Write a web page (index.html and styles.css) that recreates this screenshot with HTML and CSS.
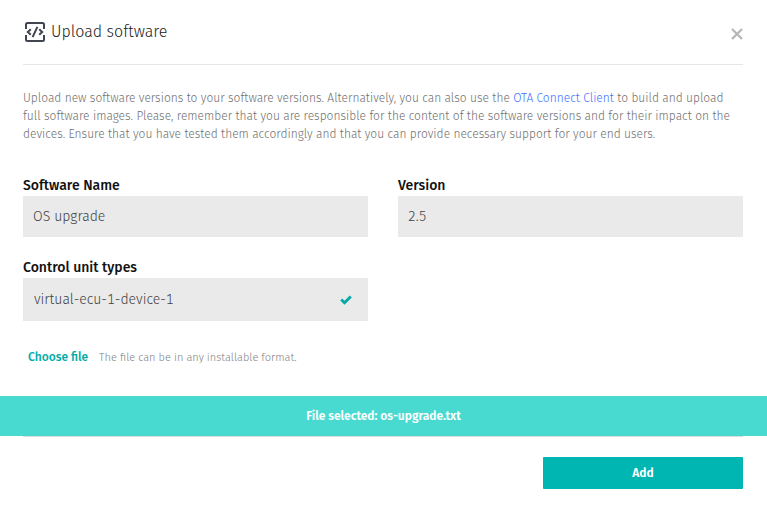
FILE: index.html
```html
<!DOCTYPE html>
<html lang="en">
<head>
<meta charset="utf-8">
<meta name="viewport" content="width=device-width, initial-scale=1">
<title>Upload software</title>
<link rel="stylesheet" href="styles.css">
</head>
<body>
<main class="dialog">
  <header class="dialog-header">
    <svg class="title-icon" viewBox="0 0 20 20" aria-hidden="true">
      <path d="M1 7V2.500Q1 1 2.500 1H17.500Q19 1 19 2.500V7M1 13V17.500Q1 19 2.500 19H17.500Q19 19 19 17.500V13" fill="none" stroke="#40454f" stroke-width="2"/>
      <path d="M5.800 7.200L2.800 10L5.800 12.800M14.200 7.200L17.200 10L14.200 12.800M12.400 4.800L7.600 15.200" fill="none" stroke="#40454f" stroke-width="2"/>
    </svg>
    <h1 class="title">Upload software</h1>
    <button class="close" type="button" aria-label="Close">
      <svg class="close-icon" viewBox="0 0 12 12" aria-hidden="true"><path d="M1 1L11 11M11 1L1 11" stroke="#b4b6b9" stroke-width="2.200"/></svg>
    </button>
  </header>
  <form class="form">
    <p class="intro">Upload new software versions to your software versions. Alternatively, you can also use the <a class="link" href="#client">OTA Connect Client</a> to build and upload full software images. Please, remember that you are responsible for the content of the software versions and for their impact on the devices. Ensure that you have tested them accordingly and that you can provide necessary support for your end users.</p>
    <div class="fields">
      <div class="field">
        <label class="label" for="name">Software Name</label>
        <input class="input" id="name" type="text" value="OS upgrade">
      </div>
      <div class="field">
        <label class="label" for="version">Version</label>
        <input class="input" id="version" type="text" value="2.5">
      </div>
      <div class="field" role="group" aria-labelledby="types">
        <span class="label" id="types">Control unit types</span>
        <label class="option" for="unit">
          <span>virtual-ecu-1-device-1</span>
          <input class="option-box" id="unit" type="checkbox" checked>
          <svg class="check" viewBox="0 0 12 10" aria-hidden="true"><path d="M1.200 4.600L4.500 7.800L10.800 1.500" fill="none" stroke="#00aba7" stroke-width="2.800"/></svg>
        </label>
      </div>
    </div>
    <div class="file-row">
      <button class="choose" type="button">Choose file</button>
      <span class="hint">The file can be in any installable format.</span>
    </div>
    <div class="selected" role="status">File selected: os-upgrade.txt</div>
    <footer class="actions">
      <button class="add" type="submit">Add</button>
    </footer>
  </form>
</main>
</body>
</html>
```
FILE: styles.css
```css
* {
  box-sizing: border-box;
}

body {
  margin: 0;
  background: #fff;
  color: #4a4c50;
  font-family: "Fira Sans", "Noto Sans", sans-serif;
  font-weight: 300;
}

button,
input {
  font: inherit;
}

button {
  border: 0;
  padding: 0;
  background: none;
  cursor: pointer;
}

.dialog-header {
  display: flex;
  align-items: center;
  height: 65px;
  margin: 0 24px 0 23px;
  border-bottom: 1px solid #e6e6e6;
}

.title-icon {
  width: 20px;
  height: 20px;
  margin: 0 6px 0 2px;
}

.title {
  flex: 1;
  margin: 0;
  font-size: 16px;
  font-weight: 300;
  line-height: 24px;
  color: #222;
}

.close {
  display: flex;
  padding-top: 4px;
}

.close-icon {
  width: 12px;
  height: 12px;
}

.intro {
  margin: 24px 0 0;
  padding: 0 30px 0 23px;
  font-size: 12px;
  line-height: 18px;
  color: #707070;
}

.link {
  color: #3c72ff;
  text-decoration: none;
}

.fields {
  display: grid;
  grid-template-columns: 1fr 1fr;
  gap: 21px 30px;
  padding: 33px 24px 0 23px;
}

.label {
  display: block;
  font-size: 14px;
  font-weight: 500;
  line-height: 20px;
  color: #111;
}

.label + * {
  width: 100%;
  background: #eaeaea;
  color: #444;
  font-size: 14px;
  font-variant-numeric: tabular-nums;
}

.input {
  display: block;
  height: 41px;
  padding: 0 10px;
  border: 0;
  border-radius: 0;
}

.option {
  display: flex;
  align-items: center;
  justify-content: space-between;
  height: 43px;
  padding: 0 16px 0 11px;
}

.option-box {
  position: absolute;
  opacity: 0;
}

.check {
  width: 12px;
  height: 10px;
}

.option-box:not(:checked) + .check {
  visibility: hidden;
}

.file-row {
  display: flex;
  align-items: baseline;
  gap: 11px;
  padding: 27px 28px 0;
  line-height: 18px;
}

.choose {
  color: #00aba7;
  font-size: 12px;
  font-weight: 500;
}

.hint {
  font-size: 11px;
  color: #808080;
}

.selected {
  margin-top: 29px;
  background: #48dad0;
  color: #fff;
  font-size: 12px;
  font-weight: 600;
  line-height: 40px;
  text-align: center;
}

.actions {
  display: flex;
  justify-content: flex-end;
  margin: 0 24px 0 23px;
  padding: 20px 0 24px;
  border-top: 1px solid #dcdcdc;
}

.add {
  width: 200px;
  height: 32px;
  border-radius: 1px;
  background: #00b6b2;
  color: #fff;
  font-size: 12px;
  font-weight: 600;
}
```
